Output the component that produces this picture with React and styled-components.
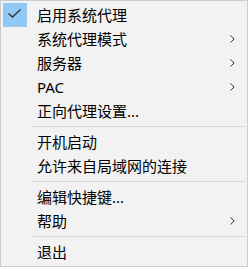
import React from "react";
import styled, { createGlobalStyle } from "styled-components";

const GlobalStyle = createGlobalStyle`
  html, body {
    margin: 0;
    padding: 0;
    background: #f2f2f2;
  }
  body {
    font-family: "Segoe UI", "Noto Sans", "Noto Sans CJK SC", sans-serif;
  }
`;

const items = [
  { label: "启用系统代理", checked: true },
  { label: "系统代理模式", sub: true },
  { label: "服务器", sub: true },
  { label: "PAC", sub: true },
  { label: "正向代理设置..." },
  { sep: true },
  { label: "开机启动" },
  { label: "允许来自局域网的连接" },
  { sep: true },
  { label: "编辑快捷键..." },
  { label: "帮助", sub: true },
  { sep: true },
  { label: "退出" },
];

const Check = () => (
  <svg width="24" height="24" viewBox="0 0 24 24">
    <path d="M5.5 10.5 L9.5 14 L17.5 6.5" fill="none" stroke="#333" strokeWidth="1.4" />
  </svg>
);

const Chevron = () => (
  <svg width="5" height="8" viewBox="0 0 5 8">
    <path d="M0.5 0.5 L4.2 4 L0.5 7.5" fill="none" stroke="#333" strokeWidth="1" />
  </svg>
);

export default function App() {
  return (
    <>
      <GlobalStyle />
      <Menu>
        {items.map((it, i) =>
          it.sep ? (
            <Separator key={i} />
          ) : (
            <Row key={i}>
              <CheckBox $on={it.checked}>{it.checked && <Check />}</CheckBox>
              <Label>{it.label}</Label>
              <Arrow>{it.sub && <Chevron />}</Arrow>
            </Row>
          )
        )}
      </Menu>
    </>
  );
}

const Menu = styled.div`
  width: 248px;
  height: 267px;
  box-sizing: border-box;
  border: 1px solid #cccccc;
  padding: 2px;
  background: #f2f2f2;
  display: flex;
  flex-direction: column;
`;

const Row = styled.div`
  height: 24px;
  display: flex;
  align-items: center;
  flex-shrink: 0;
`;

const CheckBox = styled.div`
  width: 24px;
  height: 24px;
  background: ${props => (props.$on ? "#90c8f6" : "transparent")};
  display: flex;
  flex-shrink: 0;
`;

const Label = styled.span`
  flex: 1;
  margin-left: 10px;
  font-size: 15px;
  line-height: 24px;
  color: #000;
  white-space: nowrap;
`;

const Arrow = styled.span`
  width: 5px;
  height: 8px;
  margin-right: 10px;
  display: flex;
`;

const Separator = styled.div`
  height: 1px;
  margin: 3px 0 3px 30px;
  background: #d7d7d7;
  flex-shrink: 0;
`;
